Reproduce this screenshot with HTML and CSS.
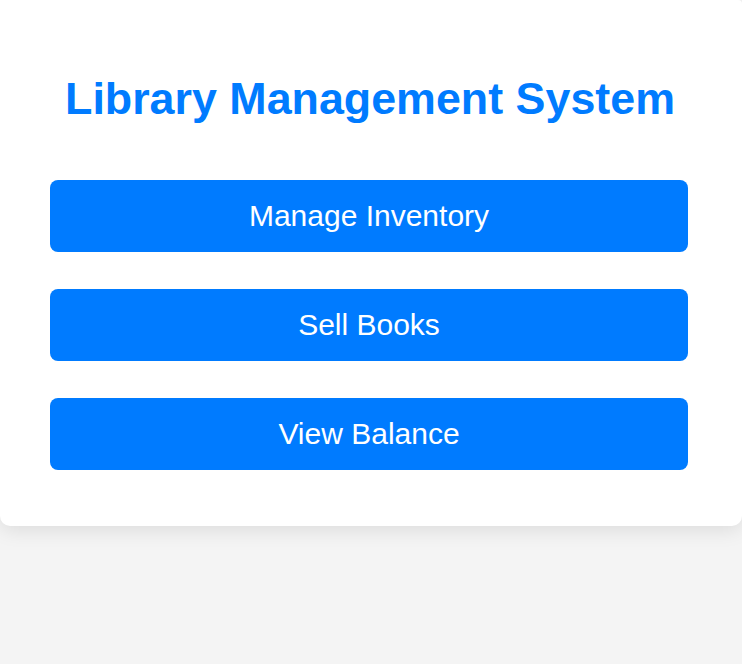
FILE: index.html
```
<!DOCTYPE html>
<html lang="en">
<head>
<meta charset="utf-8">
<title>Library Management System</title>
<link rel="stylesheet" href="styles.css">
</head>
<body>
  <main class="card">
    <h1 class="title">Library Management System</h1>
    <nav class="menu">
      <button class="menu-btn">Manage Inventory</button>
      <button class="menu-btn">Sell Books</button>
      <button class="menu-btn">View Balance</button>
    </nav>
  </main>
</body>
</html>
```
FILE: styles.css
```
html, body {
  margin: 0;
  padding: 0;
}

body {
  background: #f4f4f4;
  font-family: "Liberation Sans", Arial, sans-serif;
  min-height: 664px;
}

.card {
  background: #ffffff;
  width: 742px;
  box-sizing: border-box;
  padding: 72px 54px 56px 50px;
  border-radius: 0 4px 10px 10px;
  box-shadow: 0 4px 20px rgba(0, 0, 0, 0.1);
}

.title {
  margin: 0 0 56px;
  font-size: 44.8px;
  line-height: 52px;
  font-weight: bold;
  color: #007bff;
  text-align: center;
  padding-left: 2px;
}

.menu {
  display: flex;
  flex-direction: column;
  gap: 37px;
}

.menu-btn {
  display: block;
  width: 638px;
  height: 72px;
  border: none;
  border-radius: 8px;
  background: #007bff;
  color: #ffffff;
  font-family: "Liberation Sans", Arial, sans-serif;
  font-size: 30px;
  cursor: pointer;
  padding: 0;
}
```
